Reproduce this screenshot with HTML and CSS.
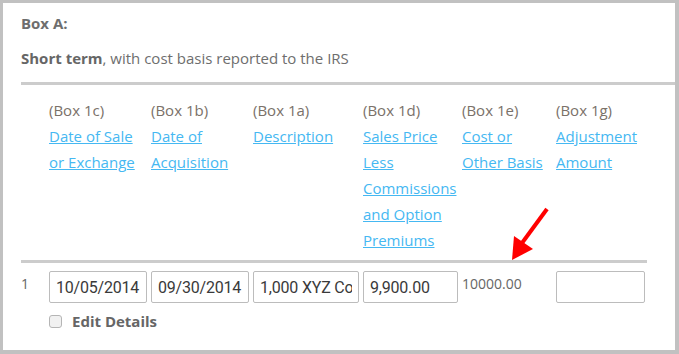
FILE: index.html
```html
<!DOCTYPE html>
<html lang="en">
<head>
    <meta charset="UTF-8">
    <meta name="viewport" content="width=device-width, initial-scale=1.0">
    <title>Box A</title>
    <link rel="stylesheet" href="styles.css">
</head>
<body>

    <div class="frame">
        <div class="top">
            <div class="box-title">Box A:</div>
            <div class="term"><b>Short term</b>, with cost basis reported to the IRS</div>
        </div>

        <div class="sheet">
            <div class="cols heads">
                <div></div>
                <div>(Box 1c)<br><a href="#">Date of Sale</a><br><a href="#">or Exchange</a></div>
                <div>(Box 1b)<br><a href="#">Date of</a><br><a href="#">Acquisition</a></div>
                <div>(Box 1a)<br><a href="#">Description</a></div>
                <div>(Box 1d)<br><a href="#">Sales Price</a><br><a href="#">Less</a><br><a href="#">Commissions</a><br><a href="#">and Option</a><br><a href="#">Premiums</a></div>
                <div>(Box 1e)<br><a href="#">Cost or</a><br><a href="#">Other Basis</a></div>
                <div>(Box 1g)<br><a href="#">Adjustment</a><br><a href="#">Amount</a></div>
            </div>

            <div class="cols entry">
                <div class="num">1</div>
                <div><input type="text" value="10/05/2014"></div>
                <div><input type="text" value="09/30/2014"></div>
                <div><input type="text" value="1,000 XYZ Co"></div>
                <div><input type="text" value="9,900.00"></div>
                <div class="num">10000.00</div>
                <div><input type="text" value="" class="last"></div>
            </div>
            <label class="details"><input type="checkbox"> Edit Details</label>
        </div>

        <svg class="arrow" width="50" height="60" viewBox="0 0 50 60">
            <line x1="44" y1="7" x2="19" y2="41" stroke="#ff0000" stroke-width="4"/>
            <polygon points="9,58 11,34 30,47" fill="#ff0000"/>
        </svg>
    </div>

</body>
</html>
```

FILE: styles.css
```css
body{
    margin: 0;
    font-family: "Open Sans", "Lato", sans-serif;
    color: #6e6e6e;
}
.frame{
    position: relative;
    box-sizing: border-box;
    width: 679px;
    height: 354px;
    background-color: #fff;
    border-style: solid;
    border-color: #c1c1c1;
    border-width: 3px 4px 4px 3px;
}
.top{
    padding: 10px 0 14px 0;
    margin-left: 18px;
    border-bottom: 3px solid #cccccc;
    font-size: 15px;
    line-height: 20px;
}
.box-title{
    font-weight: bold;
    margin-bottom: 15px;
}
.term b{
    color: #666;
}
.sheet{
    margin-left: 18px;
    width: 626px;
}
.cols{
    display: grid;
    grid-template-columns: 28px 102px 102px 110px 99px 94px 91px;
}
.heads{
    padding: 12px 0 7px;
    border-bottom: 3px solid #cccccc;
    font-size: 15px;
    line-height: 26px;
    color: #7a7169;
}
.heads a{
    color: #45b8f2;
}
.entry{
    padding-top: 8px;
}
.entry input{
    box-sizing: border-box;
    width: calc(100% - 4px);
    height: 32px;
    margin: 0;
    padding: 0 6px;
    border: 1px solid #bcbcbc;
    border-radius: 2px;
    font-family: "Roboto", sans-serif;
    font-size: 16px;
    letter-spacing: -0.2px;
    color: #3a3a3a;
}
.entry input.last{
    width: 89px;
}
.num{
    padding-top: 3px;
    font-size: 14px;
    line-height: 20px;
    color: #666;
}
.details{
    display: flex;
    align-items: center;
    margin: 8px 0 0 28px;
    font-size: 15px;
    line-height: 20px;
    font-weight: bold;
    color: #666;
}
.details input{
    appearance: none;
    width: 13px;
    height: 13px;
    margin: 0 10px 0 0;
    border: 1px solid #b5b5b5;
    border-radius: 3px;
    background-color: #f1f1f1;
}
.arrow{
    position: absolute;
    left: 500px;
    top: 199px;
}
```
